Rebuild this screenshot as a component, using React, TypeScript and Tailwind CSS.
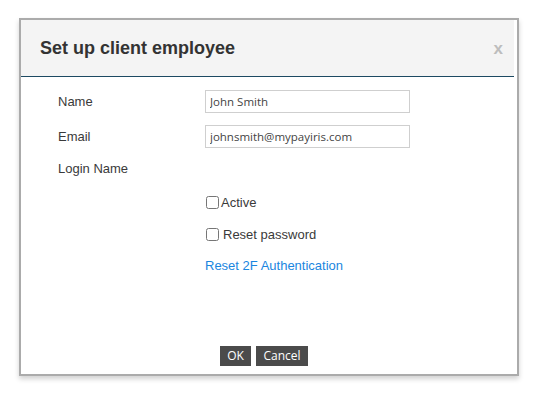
import React from "react"

const label = "font-['Liberation_Sans',Arial,sans-serif] text-[13px] text-[#3a3a3a]"
const field =
  "h-[23px] w-[205px] border border-[#cfcfcf] bg-white px-[4px] font-['Open_Sans','Noto_Sans',sans-serif] text-[11.5px] text-[#444] outline-none"

function Row({ name, value }: { name: string; value?: string }) {
  return (
    <div className="flex h-[23px] items-center">
      <div className={`w-[147px] ${label}`}>{name}</div>
      {value !== undefined && <input className={field} defaultValue={value} readOnly />}
    </div>
  )
}

export default function App() {
  return (
    <div className="h-[394px] w-[538px] bg-white pl-[19px] pt-[18px]">
      <div className="flex h-[358px] w-[500px] flex-col border-2 border-[#ababab] bg-white shadow-[0_3px_5px_rgba(0,0,0,0.18)]">
        <div className="mr-[3px] flex h-[57px] items-center justify-between border-b-[1.5px] border-[#1d4a62] bg-[#f4f4f4] pl-[19px] pr-[11px]">
          <h2 className="font-['Liberation_Sans',Arial,sans-serif] text-[18px] font-bold text-[#333]">
            Set up client employee
          </h2>
          <span className="font-['Liberation_Sans',Arial,sans-serif] text-[17px] font-bold leading-none text-[#bdbdbd]">x</span>
        </div>

        <div className="flex flex-1 flex-col pl-[37px]">
          <div className="mt-[13px]">
            <Row name="Name" value="John Smith" />
          </div>
          <div className="mt-[12px]">
            <Row name="Email" value="johnsmith@mypayiris.com" />
          </div>
          <div className="mt-[9px]">
            <Row name="Login Name" />
          </div>

          <div className="ml-[147px] flex flex-col">
            <label className={`mt-[11px] flex h-[23px] items-center ${label}`}>
              <input type="checkbox" className="m-0 ml-[1px] h-[13px] w-[13px]" />
              <span className="ml-[2px]">Active</span>
            </label>
            <label className={`mt-[9px] flex h-[23px] items-center ${label}`}>
              <input type="checkbox" className="m-0 ml-[1px] h-[13px] w-[13px]" />
              <span className="ml-[4px]">Reset password</span>
            </label>
            <a className="mt-[8px] flex h-[23px] items-center font-['Liberation_Sans',Arial,sans-serif] text-[13px] text-[#1a86e0]">
              Reset 2F Authentication
            </a>
          </div>
        </div>

        <div className="flex gap-[5px] pb-[8px] pl-[199px]">
          <button className="h-[20px] w-[31px] bg-[#4b4b4b] font-['Open_Sans','Noto_Sans',sans-serif] text-[12px] text-white">
            OK
          </button>
          <button className="h-[20px] w-[52px] bg-[#4b4b4b] font-['Open_Sans','Noto_Sans',sans-serif] text-[12px] text-white">
            Cancel
          </button>
        </div>
      </div>
    </div>
  )
}
